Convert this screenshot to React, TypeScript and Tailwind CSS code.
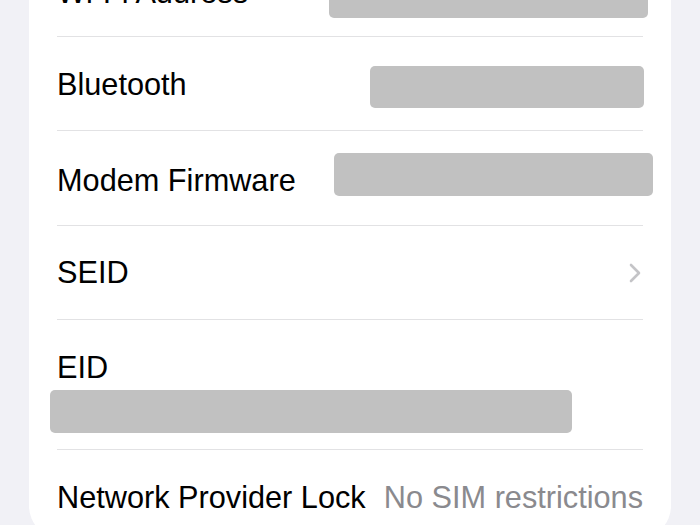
const Block = ({ className }: { className: string }) => (
  <div className={`bg-[#c1c1c1] rounded-[5px] ${className}`} />
)

const Chevron = () => (
  <svg width="14" height="22" viewBox="0 0 14 22" fill="none">
    <polyline points="3,3 11,11 3,19" stroke="#c4c4c7" strokeWidth="2.6" strokeLinecap="round" strokeLinejoin="round" />
  </svg>
)

export default function App() {
  return (
    <div className="h-[525px] w-[700px] overflow-hidden bg-[#f1f1f6] font-['Liberation_Sans',Arial,sans-serif] text-[30.7px] text-black">
      <div className="mx-[29px] -mt-[57px] bg-white rounded-b-[32px] px-[28px]">
        <div className="flex items-center h-[94px] border-b border-[#e2e2e4]">
          <span className="relative top-[4px]">Wi-Fi Address</span>
          <Block className="ml-auto mr-[-5px] mt-[13px] w-[319px] h-[43px]" />
        </div>
        <div className="flex items-center h-[94px] border-b border-[#e2e2e4]">
          <span className="relative top-[2px]">Bluetooth</span>
          <Block className="ml-auto mr-[-1px] mt-[6px] w-[274px] h-[42px]" />
        </div>
        <div className="flex items-center h-[95px] border-b border-[#e2e2e4]">
          <span className="relative top-[3px]">Modem Firmware</span>
          <Block className="ml-auto mr-[-10px] mb-[8px] w-[319px] h-[43px]" />
        </div>
        <div className="flex items-center h-[94px] border-b border-[#e2e2e4]">
          <span className="relative top-[1px]">SEID</span>
          <div className="ml-auto mr-[1px] flex items-center">
            <Chevron />
          </div>
        </div>
        <div className="flex flex-col h-[130px] border-b border-[#e2e2e4] pt-[30px]">
          <span className="leading-[36px]">EID</span>
          <Block className="ml-[-7px] mt-[4px] w-[522px] h-[43px]" />
        </div>
        <div className="flex items-center h-[88px] pt-[8px]">
          <span>Network Provider Lock</span>
          <span className="ml-auto text-[#8a8a8e]">No SIM restrictions</span>
        </div>
      </div>
    </div>
  )
}
